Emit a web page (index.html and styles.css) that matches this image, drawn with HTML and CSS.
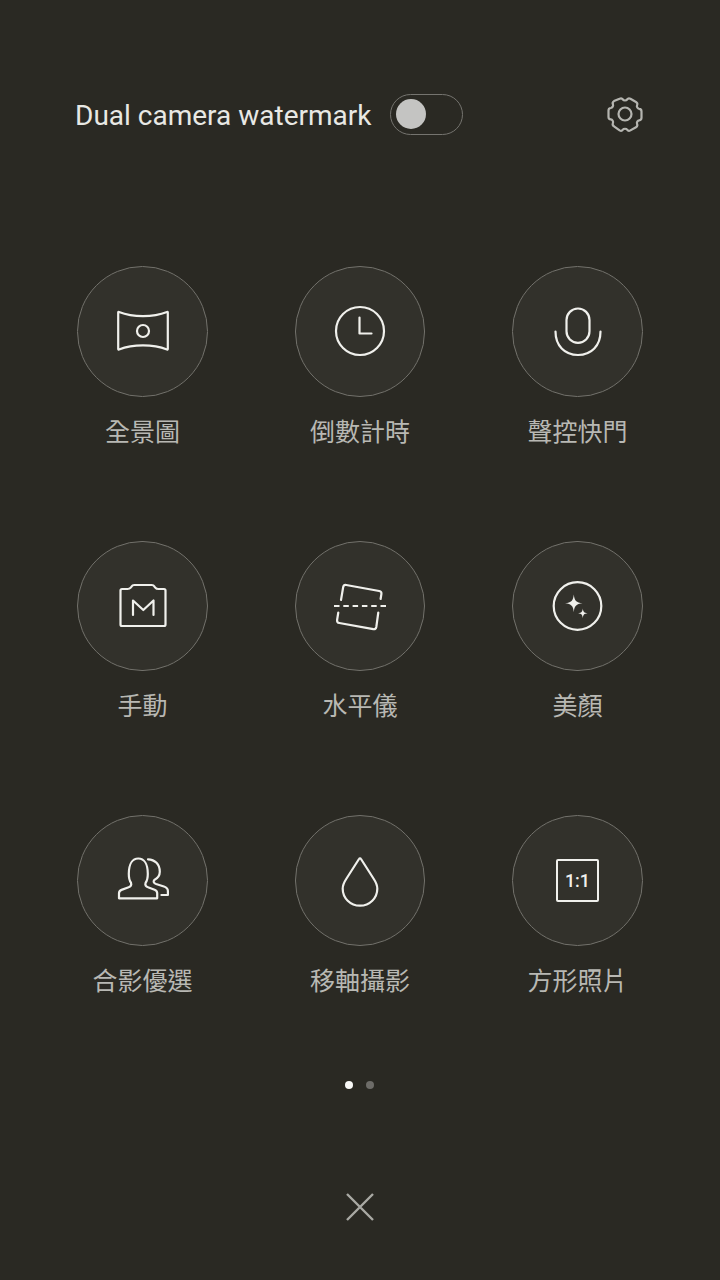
FILE: index.html
```html
<!DOCTYPE html>
<html lang="zh-Hant">
<head>
<meta charset="utf-8">
<title>Camera modes</title>
<link rel="stylesheet" href="styles.css">
</head>
<body>
<div class="screen">

  <div class="top">
    <span class="top-label">Dual camera watermark</span>
    <span class="toggle"><span class="knob"></span></span>
    <svg class="gear" width="40" height="40" viewBox="0 0 40 40">
      <path d="M14.600 4.800c1.200-.7 2.600-.3 3.300.7.900 1.300 3.300 1.300 4.200 0 .7-1 2.100-1.400 3.300-.7l5.600 3.200c1.200.7 1.600 2 1.100 3.200-.7 1.500.5 3.500 2.100 3.700 1.300.1 2.300 1.200 2.300 2.500v6.400c0 1.300-1 2.400-2.300 2.500-1.600.2-2.800 2.200-2.100 3.700.5 1.200.1 2.500-1.100 3.200l-5.600 3.200c-1.200.7-2.600.3-3.300-.7-.9-1.300-3.300-1.300-4.200 0-.7 1-2.100 1.400-3.300.7L9 32.300c-1.200-.7-1.600-2-1.100-3.200.7-1.500-.5-3.500-2.100-3.700-1.300-.1-2.300-1.200-2.300-2.500v-6.400c0-1.300 1-2.400 2.300-2.500 1.600-.2 2.800-2.200 2.100-3.700-.5-1.200-.1-2.500 1.100-3.200z"/>
      <circle cx="20" cy="20" r="6.500"/>
    </svg>
  </div>

  <div class="modes">
    <div class="mode">
      <div class="ring">
        <svg width="60" height="60" viewBox="0 0 60 60">
          <path d="M6 11C20 16.500 40 16.500 54 11c.5-.2.800 0 .8.500v36.500c0 .5-.3.700-.8.500C40 43 20 43 6 48.500c-.5.200-.8 0-.8-.500V11.500c0-.5.300-.7.800-.500z"/>
          <circle cx="30" cy="30" r="6"/>
        </svg>
      </div>
      <div class="mode-name">全景圖</div>
    </div>
    <div class="mode">
      <div class="ring">
        <svg width="60" height="60" viewBox="0 0 60 60">
          <circle cx="30" cy="30" r="24"/>
          <path d="M29.500 16.500v16h12"/>
        </svg>
      </div>
      <div class="mode-name">倒數計時</div>
    </div>
    <div class="mode">
      <div class="ring">
        <svg width="60" height="60" viewBox="0 0 60 60">
          <rect x="18.500" y="7.500" width="23" height="34.300" rx="11.500"/>
          <path d="M7.500 30.500c0 14 9 23.500 22.500 23.500s22.500-9.500 22.500-23.500"/>
        </svg>
      </div>
      <div class="mode-name">聲控快門</div>
    </div>
    <div class="mode">
      <div class="ring">
        <svg width="60" height="60" viewBox="0 0 60 60">
          <path d="M9 13h5.500c1.500 0 2.500-.5 3.200-1.400l.6-.8c.7-1.100 1.500-1.800 3-1.800h17.400c1.500 0 2.300.7 3 1.800l.6.800c.7.900 1.700 1.400 3.200 1.400H51c.9 0 1.500.6 1.500 1.500v34c0 .9-.6 1.500-1.500 1.500H9c-.9 0-1.500-.6-1.500-1.500v-34c0-.9.600-1.500 1.500-1.500z"/>
          <path d="M20 39V24.500L30.300 34l10.200-9.500V39"/>
        </svg>
      </div>
      <div class="mode-name">手動</div>
    </div>
    <div class="mode">
      <div class="ring">
        <svg width="60" height="60" viewBox="0 0 60 60">
          <path d="M11 24l2.200-13c.3-1.500 1.300-2.300 3-2l33 6c1.700.3 2.500 1.300 2.200 3l-.8 5"/>
          <path d="M48.300 36.500L46.300 51c-.3 1.700-1.300 2.500-3 2.200L9.300 47c-1.700-.3-2.500-1.300-2.200-3l1.200-7.500"/>
          <path class="dash" d="M4 30h52"/>
        </svg>
      </div>
      <div class="mode-name">水平儀</div>
    </div>
    <div class="mode">
      <div class="ring">
        <svg width="60" height="60" viewBox="0 0 60 60">
          <circle cx="29.500" cy="30" r="23.800"/>
          <path class="fill" d="M25.800 18.500c.6 6 2.300 8.200 8.800 8.800-6.500.6-8.200 2.800-8.800 8.900-.6-6.100-2.300-8.300-8.800-8.900 6.500-.6 8.200-2.800 8.800-8.800z"/>
          <path class="fill" d="M34.800 32.500c.4 3.300 1.200 4.400 4.700 4.800-3.500.4-4.300 1.500-4.700 4.900-.4-3.400-1.200-4.500-4.700-4.900 3.500-.4 4.300-1.500 4.700-4.800z"/>
        </svg>
      </div>
      <div class="mode-name">美顏</div>
    </div>
    <div class="mode">
      <div class="ring">
        <svg width="60" height="60" viewBox="0 0 60 60">
          <path d="M6 47.300v-5c0-1.800.8-2.800 2.500-3.400l6.500-2.400c2.800-1 3.700-2.700 3-4.700-1.400-1.800-2.200-4.500-2.200-9C15.800 13 19.500 7.500 25.300 7.500S34.800 13 34.800 22.800c0 4.500-.8 7.200-2.200 9-.7 2 .2 3.700 3 4.700l6 2.200c1.900.7 2.600 1.700 2.600 3.600v5z"/>
          <path d="M35 8.300c7 .3 11.800 5 11.800 12.500 0 4-1.500 6.200-5.500 8.200-1.400 1.800-.5 3.200 1.800 4l7.800 2.500c2.800.9 4 2.300 4 4.500v4h-6.500"/>
        </svg>
      </div>
      <div class="mode-name">合影優選</div>
    </div>
    <div class="mode">
      <div class="ring">
        <svg width="60" height="60" viewBox="0 0 60 60">
          <path d="M30 7.300c.4 0 .7.200 1 .7l12.800 20c2.300 3.500 3.500 6 3.500 9.700 0 9.300-7.600 17-17.300 17s-17.300-7.700-17.300-17c0-3.700 1.200-6.200 3.500-9.700L29 8c.3-.5.600-.7 1-.7z"/>
        </svg>
      </div>
      <div class="mode-name">移軸攝影</div>
    </div>
    <div class="mode">
      <div class="ring">
        <div class="square">1:1</div>
      </div>
      <div class="mode-name">方形照片</div>
    </div>
  </div>

  <div class="dots">
    <span class="dot on"></span>
    <span class="dot"></span>
  </div>

  <div class="close">
    <svg width="30" height="30" viewBox="0 0 30 30"><path d="M2 2l26 26M28 2L2 28"/></svg>
  </div>

</div>
</body>
</html>
```

FILE: styles.css
```css
html, body {margin:0; padding:0; background:#2a2923;}
.screen {width:720px; height:1280px; overflow:hidden; background:#2a2923; font-family:"Noto Sans CJK TC", Roboto, sans-serif;}

.top {display:flex; align-items:center; height:42px; padding:93px 0 0 75px;}
.top-label {margin-top:4px; font:28px/42px Roboto, sans-serif; color:#e8e8e4; width:315px; white-space:nowrap;}
.toggle {display:flex; align-items:center; box-sizing:border-box; width:73px; height:41px; padding-left:5px; border:1.500px solid #75746f; border-radius:21px;}
.knob {display:block; width:30px; height:30px; border-radius:50%; background:#c4c4c2;}
.gear {margin:0 0 0 142px; fill:none; stroke:#b5b5b0; stroke-width:2.200;}

.modes {display:grid; grid-template-columns:repeat(3, 217.5px); grid-auto-rows:274.67px; padding:131px 0 0 33.75px;}
.mode {display:flex; flex-direction:column; align-items:center;}
.ring {display:flex; align-items:center; justify-content:center; box-sizing:border-box; width:130.500px; height:130.500px; border:1.500px solid #72716b; border-radius:50%; background:#32312b;}
.ring svg {display:block; fill:none; stroke:#f0f0ec; stroke-width:2.200; stroke-linecap:round; stroke-linejoin:round;}
.ring .dash {stroke-dasharray:5.500 3.800; stroke-linecap:butt;}
.ring .fill {fill:#f0f0ec; stroke:none;}
.mode-name {margin-top:15px; font-size:25px; line-height:36px; color:#b8b8b3; white-space:nowrap;}

.square {box-sizing:border-box; width:43px; height:43px; border:2px solid #f0f0ec; border-radius:2px; font:500 18px/39px Roboto, sans-serif; text-align:center; color:#f0f0ec;}

.dots {display:flex; justify-content:center; gap:13px; margin-top:-9px; padding-right:1px;}
.dot {display:block; width:8px; height:8px; border-radius:50%; background:#6d6c68;}
.dot.on {background:#f8f8f6;}

.close {display:flex; justify-content:center; margin-top:103px;}
.close svg {display:block; fill:none; stroke:#a9a9a4; stroke-width:2.400;}
```
